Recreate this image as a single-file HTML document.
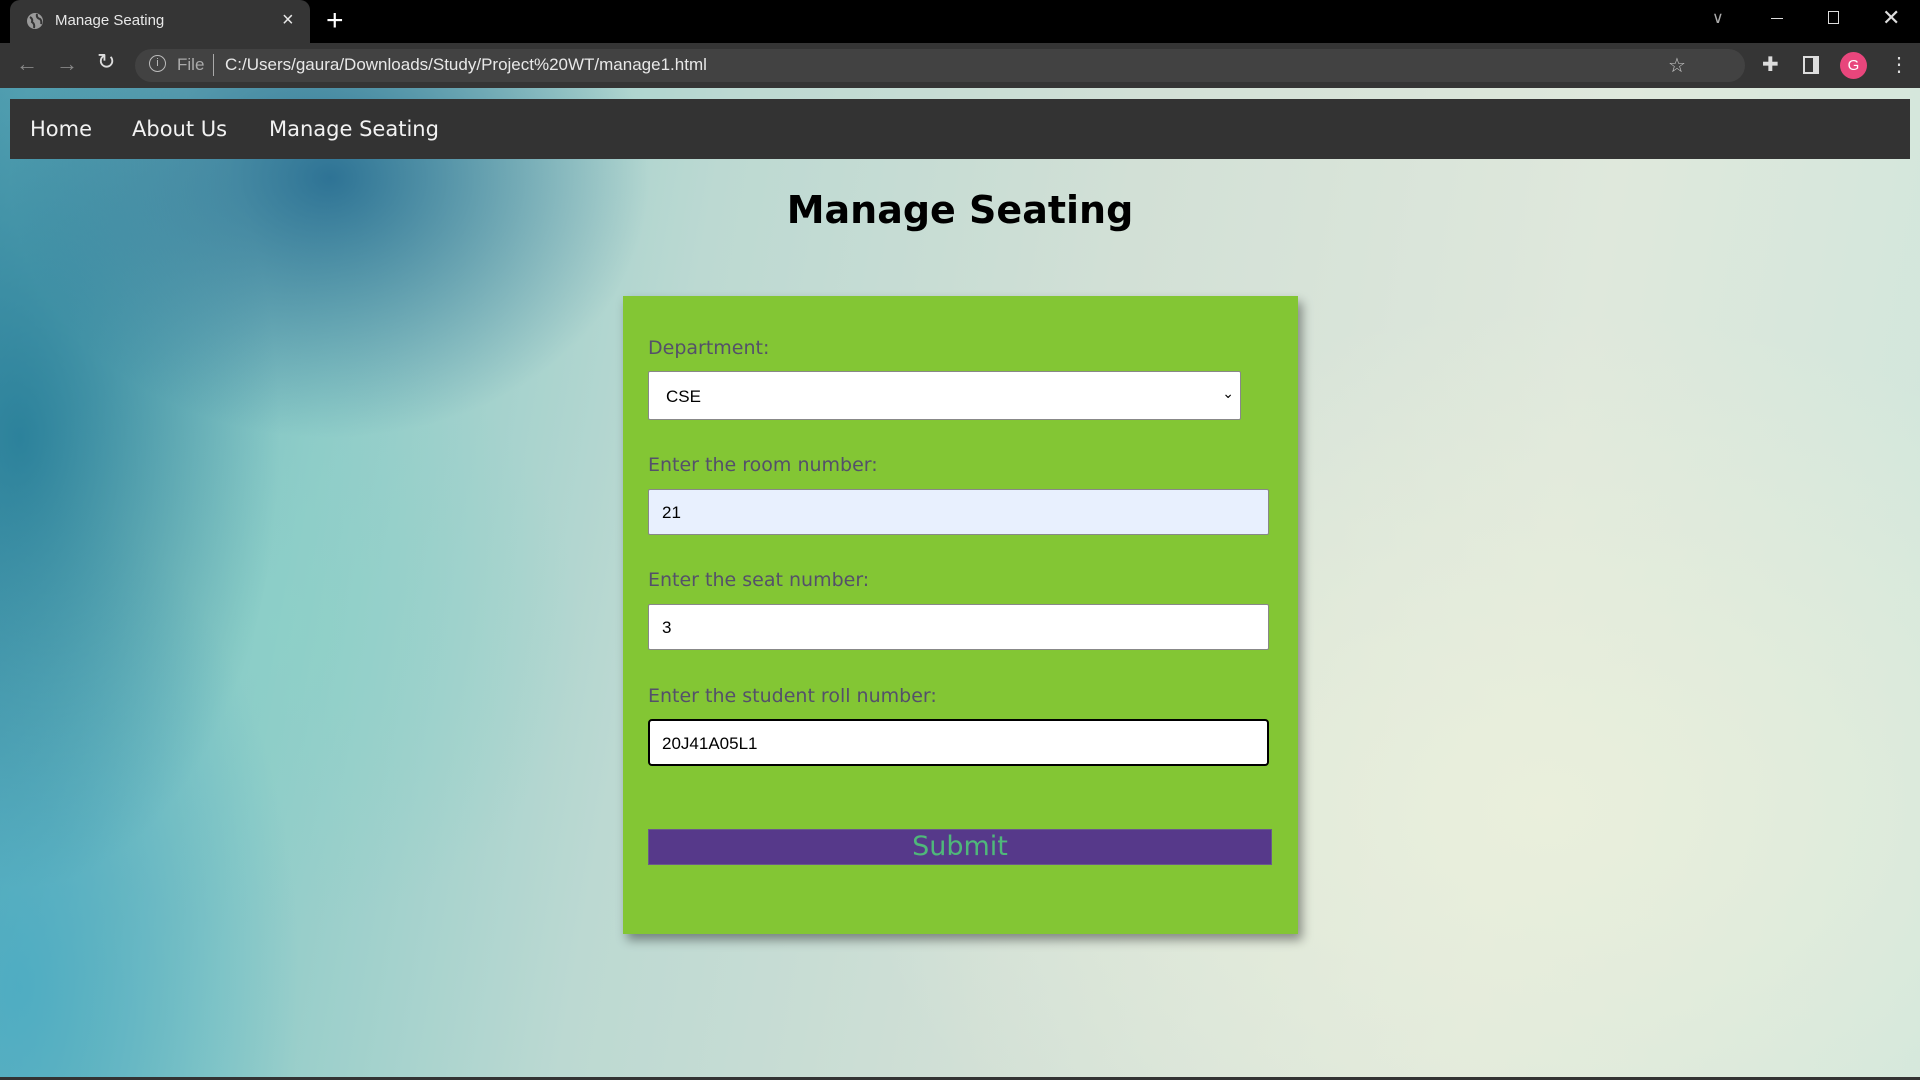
<!DOCTYPE html>
<html><head><meta charset="utf-8"><style>
*{margin:0;padding:0;box-sizing:border-box}
html,body{width:1920px;height:1080px;overflow:hidden;font-family:"DejaVu Sans","Liberation Sans",sans-serif}
body{position:relative;background:#000}
.tabbar{position:absolute;left:0;top:0;width:1920px;height:43px;background:#000}
.tab{position:absolute;left:10px;top:0;width:300px;height:43px;background:#353535;border-radius:10px 10px 0 0;color:#e8e8e8;font:15px "Liberation Sans",sans-serif}
.toolbar{position:absolute;left:0;top:43px;width:1920px;height:45px;background:#353535}
.omni{position:absolute;left:135px;top:6px;width:1610px;height:33px;background:#424242;border-radius:17px;color:#e8e8e8;font:17px "Liberation Sans",sans-serif}
.page{position:absolute;left:0;top:88px;width:1920px;height:989px;overflow:hidden;
background:
radial-gradient(ellipse 320px 260px at 330px 90px,rgba(30,100,140,.85),rgba(30,100,140,0) 100%),
radial-gradient(ellipse 260px 450px at 20px 350px,rgba(25,115,145,.75),rgba(25,115,145,0) 100%),
radial-gradient(ellipse 280px 500px at 20px 900px,rgba(70,170,195,.8),rgba(70,170,195,0) 100%),
radial-gradient(ellipse 300px 300px at 280px 540px,rgba(140,210,200,.6),rgba(140,210,200,0) 100%),
radial-gradient(ellipse 700px 500px at 1550px 720px,rgba(235,240,220,.9),rgba(235,240,220,0) 100%),
linear-gradient(100deg,#5aa5b5 0%,#8ecbc8 18%,#bcd9d2 35%,#d2e0d6 55%,#dfe8dc 78%,#cfe6dc 100%)}
.nav{position:absolute;left:10px;top:11px;width:1900px;height:60px;background:#333}
.nav a{position:absolute;top:18px;color:#f2f2f2;font-size:21px;text-decoration:none}
h1{position:absolute;left:0;width:1920px;top:100px;text-align:center;font-size:38px;font-weight:bold;color:#000}
.card{position:absolute;left:623px;top:208px;width:675px;height:638px;background:#83c634;box-shadow:4px 6px 10px rgba(0,0,0,.4)}
.lbl{position:absolute;left:25px;color:#54506a;font-size:19px}
.in{position:absolute;left:25px;width:621px;height:46px;background:#fff;border:1px solid #888;border-radius:2px;font:17px "Liberation Sans",sans-serif;color:#000;padding:13px 0 0 13px}
.btn{position:absolute;left:25px;top:533px;width:624px;height:36px;background:#56398a;border:1px solid #6a5a8a;color:#4fb87a;font-size:27px;text-align:center;line-height:34px}
</style></head><body>
<div class="tabbar">
 <div class="tab">
  <svg style="position:absolute;left:16px;top:12px" width="18" height="18" viewBox="0 0 18 18"><circle cx="9" cy="9" r="8" fill="#9a9a9a"/><path d="M4 5 Q7 7 6 10 Q9 12 8 16 M11 2 Q10 6 14 7 Q16 9 15 12" stroke="#353535" stroke-width="2" fill="none"/></svg>
  <span style="position:absolute;left:45px;top:12px">Manage Seating</span>
  <span style="position:absolute;left:272px;top:9px;font-size:20px">×</span>
 </div>
 <span style="position:absolute;left:326px;top:4px;color:#fff;font:30px 'Liberation Sans',sans-serif">+</span>
 <span style="position:absolute;left:1712px;top:8px;color:#aaa;font:16px 'Liberation Sans',sans-serif">∨</span>
 <div style="position:absolute;left:1771px;top:18px;width:12px;height:1px;background:#ddd"></div>
 <div style="position:absolute;left:1828px;top:11px;width:11px;height:13px;border:1.5px solid #ddd"></div>
 <span style="position:absolute;left:1882px;top:5px;color:#ddd;font:22px 'Liberation Sans',sans-serif">✕</span>
</div>
<div class="toolbar">
 <span style="position:absolute;left:16px;top:8px;color:#888;font:22px 'Liberation Sans',sans-serif">←</span>
 <span style="position:absolute;left:56px;top:8px;color:#888;font:22px 'Liberation Sans',sans-serif">→</span>
 <span style="position:absolute;left:97px;top:7px;color:#ddd;font:22px 'DejaVu Sans',sans-serif">↻</span>
 <div class="omni">
  <span style="position:absolute;left:14px;top:6px;width:17px;height:17px;border:1.5px solid #bbb;border-radius:50%;font-size:11px;text-align:center;line-height:14px;color:#bbb">i</span>
  <span style="position:absolute;left:42px;top:6px;color:#aaa">File</span>
  <span style="position:absolute;left:78px;top:5px;width:1px;height:22px;background:#aaa"></span>
  <span style="position:absolute;left:90px;top:6px">C:/Users/gaura/Downloads/Study/Project%20WT/manage1.html</span>
  <span style="position:absolute;left:1533px;top:4px;color:#ccc;font-size:20px">☆</span>
 </div>
 <span style="position:absolute;left:1762px;top:9px;color:#ddd;font:20px 'DejaVu Sans',sans-serif">✚</span>
 <div style="position:absolute;left:1803px;top:13px;width:16px;height:18px;border:2px solid #ddd;border-right-width:6px"></div>
 <div style="position:absolute;left:1840px;top:9px;width:27px;height:27px;border-radius:50%;background:#e8467c;color:#fff;font:15px 'Liberation Sans',sans-serif;text-align:center;line-height:27px">G</div>
 <span style="position:absolute;left:1889px;top:9px;color:#ddd;font:20px 'Liberation Sans',sans-serif">⋮</span>
</div>
<div class="page">
 <div class="nav">
  <a style="left:20px">Home</a><a style="left:122px">About Us</a><a style="left:259px">Manage Seating</a>
 </div>
 <h1>Manage Seating</h1>
 <div class="card">
  <div class="lbl" style="top:41px">Department:</div>
  <div class="in" style="top:75px;width:593px;height:49px;padding-top:15px;padding-left:17px">CSE<span style="position:absolute;right:6px;top:13px;font-size:14px">⌄</span></div>
  <div class="lbl" style="top:158px">Enter the room number:</div>
  <div class="in" style="top:193px;background:#e8f0fe">21</div>
  <div class="lbl" style="top:273px">Enter the seat number:</div>
  <div class="in" style="top:308px">3</div>
  <div class="lbl" style="top:389px">Enter the student roll number:</div>
  <div class="in" style="top:423px;height:47px;border:2px solid #000;border-radius:4px;padding-left:12px">20J41A05L1</div>
  <div class="btn">Submit</div>
 </div>
</div>
<div style="position:absolute;left:0;top:1077px;width:1920px;height:3px;background:#333"></div>
</body></html>
